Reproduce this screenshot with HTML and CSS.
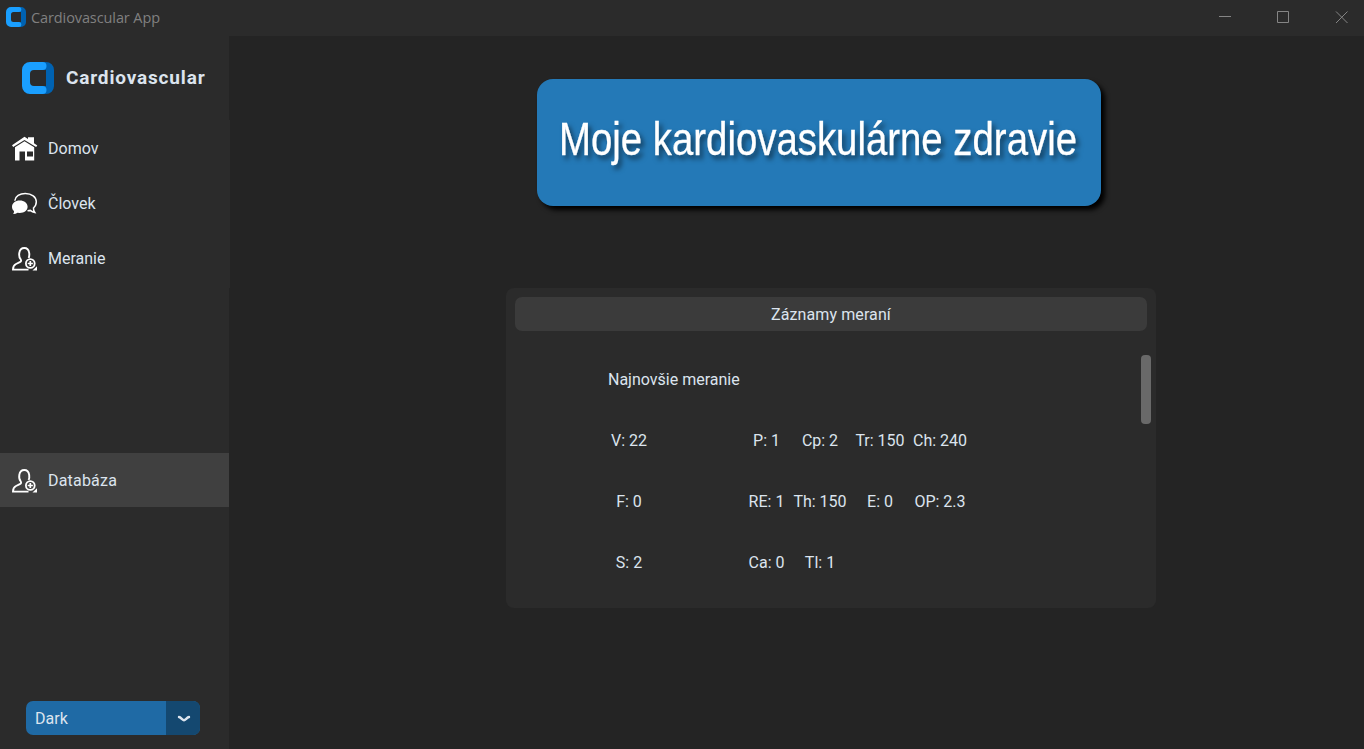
FILE: index.html
```html
<!DOCTYPE html>
<html lang="sk">
<head>
<meta charset="utf-8">
<title>Cardiovascular App</title>
<link rel="stylesheet" href="styles.css">
</head>
<body>
<svg class="defs" width="0" height="0">
  <symbol id="user-add" viewBox="0 0 26 26">
    <path d="M16.600 12C17.300 10.500 17.500 8.800 17.200 6.800C16.700 3.600 15 2 12.300 2C9.600 2 7.800 3.600 7.300 6.800C6.900 9.600 7.300 11.700 8.600 13.200C9.500 14.400 9.200 15.500 7.800 16.200L4 18C1.800 19.100 1 20.500 1 23.600H16.500" fill="none" stroke="#fff" stroke-width="1.900"/>
    <circle cx="18.300" cy="17.500" r="4.400" fill="none" stroke="#fff" stroke-width="1.800"/>
    <path d="M18.300 14.900V20.100M15.700 17.500H20.900" stroke="#fff" stroke-width="1.700"/>
    <path d="M25 20.300V24.500H20.500Z" fill="#fff"/>
  </symbol>
  <symbol id="logo" viewBox="0 0 32 32">
    <path d="M20 0h4a8 8 0 0 1 8 8v16a8 8 0 0 1-8 8h-4v-8h4V8h-4z" class="logo-dark"/>
    <path d="M8 0H20.500a3.500 3.500 0 0 1 0 8H12a4 4 0 0 0-4 4V20a4 4 0 0 0 4 4H20.500a3.500 3.500 0 0 1 0 8H8a8 8 0 0 1-8-8V8a8 8 0 0 1 8-8z" class="logo-light"/>
  </symbol>
</svg>
<div class="window">
  <header class="titlebar">
    <svg class="app-icon" width="20" height="20"><use href="#logo"/></svg>
    <span class="app-title">Cardiovascular App</span>
    <svg class="controls" width="130" height="14" viewBox="0 0 130 14">
      <path d="M0 6.500H12M58.500 1.500h11v11h-11z"/>
      <path d="M117 1.500L128.500 13M128.500 1.500L117 13"/>
    </svg>
  </header>
  <div class="body">
    <aside class="sidebar">
      <div class="brand">
        <svg width="32" height="32"><use href="#logo"/></svg>
        <span>Cardiovascular</span>
      </div>
      <nav class="nav">
        <a class="item">
          <svg width="26" height="26" viewBox="0 0 26 26">
            <path d="M0 9.300L12.500 .7L16 3.100V1.200H22V7.200L25.300 9.400L24.100 11.100L12.500 3.900L1.200 11.100Z" fill="#fff"/>
            <path d="M3 11.300L12.500 5.200L22.200 11.300V24.500H13V15.500H7.500V24.500H3Z" fill="#fff"/>
            <rect x="15" y="15.500" width="6" height="5" fill="#2b2b2b"/>
          </svg>
          <span>Domov</span>
        </a>
        <a class="item">
          <svg width="26" height="26" viewBox="0 0 26 26">
            <path d="M2.800 9.700C3.200 5.300 7.800 2.500 13.300 2.500C19.700 2.500 24.300 6 24.300 10.800C24.300 13.700 22.900 15.800 21.500 17C21.300 18.700 21.700 20 22.800 21.500C20.600 21.300 19.400 20.400 18.300 19.400L15.500 19.700" fill="none" stroke="#fff" stroke-width="1.500"/>
            <path d="M7.700 9.600C12.300 9.600 15.600 12.300 15.600 15.800C15.600 19.400 12.300 22 7.700 22L5.500 21.800C4.200 22.700 2.700 23.200 1.200 23.100C1.900 22.100 2.100 21 2 20.100C.7 19 0 17.500 0 15.800C0 12.300 3.400 9.600 7.700 9.600Z" fill="#fff"/>
          </svg>
          <span>Človek</span>
        </a>
        <a class="item">
          <svg width="26" height="26"><use href="#user-add"/></svg>
          <span>Meranie</span>
        </a>
      </nav>
      <a class="item active">
        <svg width="26" height="26"><use href="#user-add"/></svg>
        <span>Databáza</span>
      </a>
      <div class="select">
        <span class="value">Dark</span>
        <span class="arrow"><svg width="14" height="8" viewBox="0 0 14 8"><path d="M2 2C4 2.200 5.500 5.200 7 5.200S10 2.200 12 2"/></svg></span>
      </div>
    </aside>
    <main class="main">
      <div class="banner">
        <svg width="518" height="60">
          <text x="-1" y="48" textLength="518" lengthAdjust="spacingAndGlyphs">Moje kardiovaskulárne zdravie</text>
        </svg>
      </div>
      <section class="panel">
        <h2 class="panel-title">Záznamy meraní</h2>
        <div class="scroll">
          <div class="records">
            <span class="newest">Najnovšie meranie</span>
            <span class="first">V: 22</span><span class="second">P: 1</span><span>Cp: 2</span><span>Tr: 150</span><span>Ch: 240</span>
            <span class="first">F: 0</span><span class="second">RE: 1</span><span>Th: 150</span><span>E: 0</span><span>OP: 2.3</span>
            <span class="first">S: 2</span><span class="second">Ca: 0</span><span>Tl: 1</span>
          </div>
          <div class="thumb"></div>
        </div>
      </section>
    </main>
  </div>
</div>
</body>
</html>
```
FILE: styles.css
```css
* { box-sizing: border-box; }
body { margin: 0; background: #242424; color: #dce4ee; font: 16px/20px Roboto, sans-serif; }
.defs { position: absolute; }
.window { width: 1364px; height: 749px; display: flex; flex-direction: column; overflow: hidden; }
.titlebar { height: 36px; background: #2b2b2b; display: flex; align-items: center; padding: 0 15px 2px 6px; }
.app-title { font: 14.5px/20px "Open Sans", sans-serif; color: #808080; letter-spacing: -.1px; margin-left: 5px; padding-top: 2px; flex: 1; }
.controls { fill: none; stroke: #858585; stroke-width: 1; }
.logo-dark { fill: #0062b1; }
.logo-light { fill: #1a9fff; }
.app-icon .logo-light { fill: #0a9bff; }
.body { flex: 1; display: flex; }
.sidebar { width: 229px; background: #2b2b2b; display: flex; flex-direction: column; }
.brand { display: flex; align-items: center; gap: 12px; height: 84px; padding-left: 22px; font-size: 19px; font-weight: 700; letter-spacing: .83px; }
.nav { width: 230px; height: 168px; background: #2b2b2b; padding-top: 1px; }
.item { display: flex; align-items: center; gap: 10px; height: 55px; padding-left: 12px; }
.item.active { height: 54px; margin-top: 165px; padding-top: 1px; background: #404040; letter-spacing: .2px; }
.select { width: 174px; height: 34px; margin: 194px 0 0 26px; display: flex; border-radius: 7px; overflow: hidden; background: #1f6aa5; }
.value { flex: 1; padding: 8px 9px 6px; }
.arrow { width: 34px; padding: 1px 0 0 1px; background: #144870; display: grid; place-items: center; }
.arrow path { fill: none; stroke: #dce4ee; stroke-width: 2.4; stroke-linecap: round; }
.main { flex: 1; padding: 43px 208px 0 277px; display: flex; flex-direction: column; }
.banner { width: 564px; height: 127px; margin-left: 31px; border-radius: 16px; background: #2479b7; box-shadow: 4px 4px 5px #000; padding: 28px 23px; }
.banner svg { display: block; overflow: visible; filter: drop-shadow(3px 4px 2.5px rgba(0, 0, 0, .5)); }
.banner text { font: 47px "Liberation Sans", sans-serif; fill: #fff; stroke: #fff; stroke-width: .3px; }
.panel { width: 650px; height: 320px; margin-top: 82px; padding: 9px; border-radius: 8px; background: #2b2b2b; }
.panel-title { height: 34px; margin: 0; border-radius: 7px; background: #3b3b3b; font-size: 16px; font-weight: 400; line-height: 36px; letter-spacing: .1px; text-align: center; }
.scroll { display: flex; justify-content: space-between; padding-top: 18px; margin-right: -4px; }
.records { display: grid; grid-template-columns: 42px 90px 53px 54px 66px 54px; grid-auto-rows: 61px; margin-left: 93px; align-items: center; justify-items: center; white-space: nowrap; }
.newest { grid-column: 1 / -1; justify-self: start; }
.first { grid-column: 1; }
.second { grid-column: 3; }
.thumb { width: 10px; height: 69px; margin-top: 6px; border-radius: 4px; background: #696969; }
```
